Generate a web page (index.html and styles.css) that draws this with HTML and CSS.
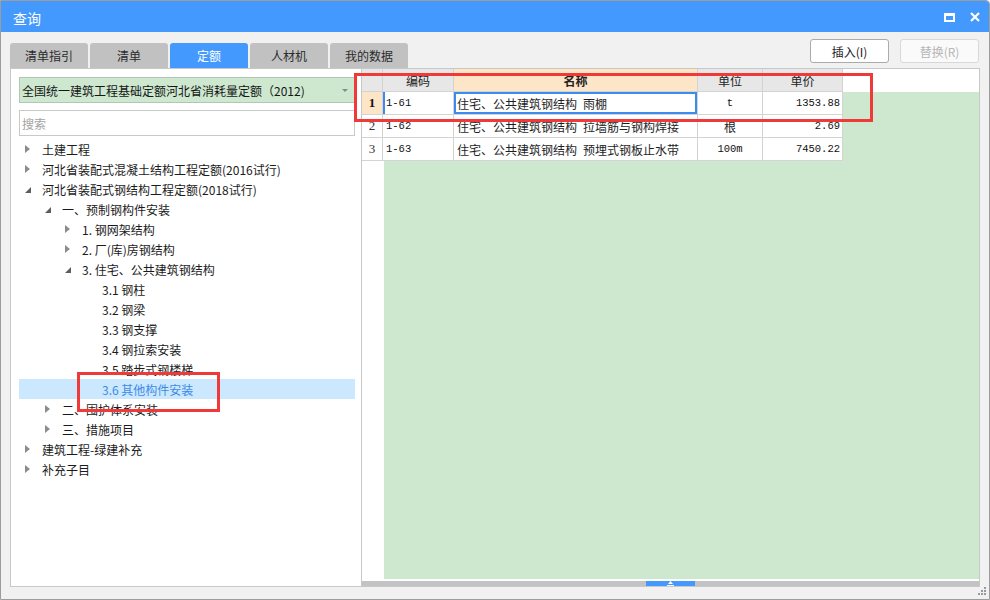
FILE: index.html
```html
<!DOCTYPE html>
<html lang="zh">
<head>
<meta charset="utf-8">
<title>查询</title>
<link rel="stylesheet" href="styles.css">
</head>
<body>
<div class="win">
  <div class="titlebar">
    <span class="title">查询</span>
    <div class="tb-icons">
      <svg class="ic" width="11" height="9" viewBox="0 0 11 9"><path d="M0 0H11V9H0Z M2 3H9V7H2Z" fill="#fff" fill-rule="evenodd"/></svg>
      <svg class="ic" width="10" height="10" viewBox="0 0 10 10"><path d="M1 1L9 9M9 1L1 9" stroke="#fff" stroke-width="2.2" fill="none"/></svg>
    </div>
  </div>

  <div class="toolbar">
    <div class="tabs">
      <div class="tab">清单指引</div>
      <div class="tab">清单</div>
      <div class="tab on">定额</div>
      <div class="tab">人材机</div>
      <div class="tab">我的数据</div>
    </div>
    <div class="btns">
      <button class="btn">插入(I)</button>
      <button class="btn dis">替换(R)</button>
    </div>
  </div>

  <div class="main">
    <div class="left">
      <div class="sel"><span>全国统一建筑工程基础定额河北省消耗量定额（2012)</span><i class="arr"></i></div>
      <div class="search">搜索</div>
      <div class="tree">
        <div class="node l0"><i class="tw shut"></i><span>土建工程</span></div>
        <div class="node l0"><i class="tw shut"></i><span>河北省装配式混凝土结构工程定额(2016试行)</span></div>
        <div class="node l0"><i class="tw open"></i><span>河北省装配式钢结构工程定额(2018试行)</span></div>
        <div class="node l1"><i class="tw open"></i><span>一、预制钢构件安装</span></div>
        <div class="node l2"><i class="tw shut"></i><span>1. 钢网架结构</span></div>
        <div class="node l2"><i class="tw shut"></i><span>2. 厂(库)房钢结构</span></div>
        <div class="node l2"><i class="tw open"></i><span>3. 住宅、公共建筑钢结构</span></div>
        <div class="node l3"><i class="tw"></i><span>3.1 钢柱</span></div>
        <div class="node l3"><i class="tw"></i><span>3.2 钢梁</span></div>
        <div class="node l3"><i class="tw"></i><span>3.3 钢支撑</span></div>
        <div class="node l3"><i class="tw"></i><span>3.4 钢拉索安装</span></div>
        <div class="node l3"><i class="tw"></i><span>3.5 踏步式钢楼梯</span></div>
        <div class="node l3 sel-row"><i class="tw"></i><span>3.6 其他构件安装</span></div>
        <div class="node l1"><i class="tw shut"></i><span>二、围护体系安装</span></div>
        <div class="node l1"><i class="tw shut"></i><span>三、措施项目</span></div>
        <div class="node l0"><i class="tw shut"></i><span>建筑工程-绿建补充</span></div>
        <div class="node l0"><i class="tw shut"></i><span>补充子目</span></div>
      </div>
    </div>

    <div class="right">
      <div class="grid">
        <div class="gh">
          <div class="c rn hd"></div>
          <div class="c code hd">编码</div>
          <div class="c name hd hn">名称</div>
          <div class="c unit hd">单位</div>
          <div class="c price hd">单价</div>
          <div class="gfill"></div>
        </div>
        <div class="gb">
          <div class="rncol">
            <div class="c rn num cur">1</div>
            <div class="c rn num">2</div>
            <div class="c rn num">3</div>
          </div>
          <div class="dcol">
            <div class="grow">
              <div class="c code mono curbar">1-61</div>
              <div class="c name focus">住宅、公共建筑钢结构&ensp;雨棚</div>
              <div class="c unit mono">t</div>
              <div class="c price mono">1353.88</div>
            </div>
            <div class="grow">
              <div class="c code mono">1-62</div>
              <div class="c name">住宅、公共建筑钢结构&ensp;拉墙筋与钢构焊接</div>
              <div class="c unit">根</div>
              <div class="c price mono">2.69</div>
            </div>
            <div class="grow">
              <div class="c code mono">1-63</div>
              <div class="c name">住宅、公共建筑钢结构&ensp;预埋式钢板止水带</div>
              <div class="c unit mono">100m</div>
              <div class="c price mono">7450.22</div>
            </div>
          </div>
        </div>
      </div>
      <div class="hs">
        <div class="thumb"><svg width="7" height="5" viewBox="0 0 7 5"><path d="M3.5 0L6 3H1Z M0 4H7V5H0Z" fill="#fff"/></svg></div>
      </div>
    </div>
  </div>

  <div class="foot">
    <svg width="9" height="9" viewBox="0 0 9 9" fill="#9a9a9a"><rect x="6" y="0" width="2" height="2"/><rect x="3" y="3" width="2" height="2"/><rect x="6" y="3" width="2" height="2"/><rect x="0" y="6" width="2" height="2"/><rect x="3" y="6" width="2" height="2"/><rect x="6" y="6" width="2" height="2"/></svg>
  </div>

  <div class="mark mark1"></div>
  <div class="mark mark2"></div>
</div>
</body>
</html>
```

FILE: styles.css
```css
* { box-sizing: border-box; margin: 0; padding: 0; }

body {
  margin: 0;
  font-family: "Noto Sans CJK SC", "Microsoft YaHei", sans-serif;
  font-size: 12px;
  color: #1e1e1e;
  background: #fff;
}

.win {
  position: relative;
  width: 990px;
  height: 600px;
  border: 1px solid #9c9c9c;
  border-radius: 0 4px 0 0;
  background: #f1f1f1;
  display: flex;
  flex-direction: column;
  overflow: hidden;
}

/* title bar */
.titlebar {
  height: 31px;
  flex: none;
  background: #4499ff;
  color: #fff;
  display: flex;
  align-items: center;
  padding: 0 9px 0 12px;
}
.title { flex: 1; font-size: 14px; line-height: 1; margin-top: 2px; }
.tb-icons { display: flex; align-items: center; gap: 15px; margin-top: 1px; }
.ic { display: block; }

/* toolbar: tabs + buttons */
.toolbar {
  height: 36px;
  flex: none;
  display: flex;
  justify-content: space-between;
  padding: 0 10px 0 9px;
}
.tabs { display: flex; gap: 2px; align-self: flex-end; }
.tab {
  width: 78px;
  height: 25px;
  background: #c1c1c1;
  border-radius: 3px 3px 0 0;
  display: flex;
  align-items: center;
  justify-content: center;
  color: #2b2b2b;
}
.tab.on { background: #4499ff; color: #fff; }

.btns { display: flex; gap: 11px; padding-top: 7px; }
.btn {
  width: 79px;
  height: 24px;
  border: 1px solid #ababab;
  border-radius: 3px;
  background: #fff;
  font: 12px "Noto Sans CJK SC", sans-serif;
  color: #222;
  display: flex;
  align-items: center;
  justify-content: center;
}
.btn.dis { border-color: #d8d8d8; color: #b6b6b6; background: #fafafa; }

/* main area */
.main {
  height: 519px;
  flex: none;
  display: flex;
  margin: 0 9px;
}

.left {
  width: 352px;
  flex: none;
  border: 1px solid #c8c8c8;
  background: #fff;
  padding: 8px 6px 0 8px;
}
.sel {
  height: 26px;
  background: #cde8cf;
  border: 1px solid #b3c6b5;
  display: flex;
  align-items: center;
  justify-content: space-between;
  padding: 0 6px 0 2px;
  color: #151515;
}
.arr {
  width: 0;
  height: 0;
  border-top: 3px solid #8a8a8a;
  border-left: 3px solid transparent;
  border-right: 3px solid transparent;
}
.search {
  height: 26px;
  margin-top: 7px;
  border: 1px solid #c9c9c9;
  padding-left: 2px;
  color: #a3a3a3;
  display: flex;
  align-items: center;
}

.tree { margin-top: 3px; }
.node {
  height: 20px;
  display: flex;
  align-items: center;
  white-space: nowrap;
  color: #1b1b1b;
}
.l0 { padding-left: 6px; }
.l1 { padding-left: 26px; }
.l2 { padding-left: 46px; }
.l3 { padding-left: 66px; }
.tw { width: 17px; flex: none; display: flex; align-items: center; height: 20px; }
.tw.shut::before {
  content: "";
  width: 0; height: 0;
  border-left: 5px solid #8c8c8c;
  border-top: 4px solid transparent;
  border-bottom: 4px solid transparent;
}
.tw.open::before {
  content: "";
  width: 0; height: 0;
  margin-top: 2px;
  border-bottom: 6px solid #5e5e5e;
  border-left: 6px solid transparent;
}
.node.sel-row { background: #cce8ff; color: #3b8be6; }

/* right grid */
.right {
  flex: 1;
  border: 1px solid #c8c8c8;
  border-left: none;
  background: #fff;
  display: flex;
  flex-direction: column;
}
.grid { flex: 1; display: flex; flex-direction: column; }
.gh { height: 23px; flex: none; display: flex; }
.gfill { flex: 1; }
.gb { flex: 1; display: flex; }
.rncol { width: 21px; flex: none; }
.dcol {
  flex: 1;
  margin-bottom: 2px;
  background: linear-gradient(90deg, #fff 0 1px, #cde8cf 1px);
}
.grow { display: flex; }

.c {
  height: 23px;
  flex: none;
  border-right: 1px solid #d3d3d3;
  border-bottom: 1px solid #d3d3d3;
  background: #fff;
  display: flex;
  align-items: center;
  white-space: nowrap;
  overflow: hidden;
}
.rn { width: 21px; justify-content: center; }
.code { width: 71px; padding-left: 3px; }
.name { width: 244px; padding-left: 3px; }
.unit { width: 65px; justify-content: center; }
.price { width: 80px; justify-content: flex-end; padding-right: 2px; }

.hd { background: #e7e7e7; justify-content: center; padding: 0; color: #222; }
.hn { background: #fde5c8; font-weight: 700; }

.num { font-family: "Liberation Serif", serif; font-size: 13px; color: #333; }
.num.cur { background: #fde5c8; font-weight: 700; color: #111; }
.mono { font-family: "Liberation Mono", monospace; font-size: 10.5px; color: #111; }
.curbar { box-shadow: inset 2px 0 0 #3c8cf0; }
.focus { box-shadow: inset 0 0 0 2px #3c8cf0; }

.hs {
  height: 5px;
  flex: none;
  background: #c3c3c3;
  display: flex;
  justify-content: center;
}
.thumb {
  width: 49px;
  background: #4499ff;
  display: flex;
  align-items: center;
  justify-content: center;
}
.thumb svg { display: block; }

.foot {
  flex: 1;
  display: flex;
  justify-content: flex-end;
  align-items: flex-start;
  padding-right: 2px;
}
.foot svg { display: block; }

/* red annotation boxes (overlays) */
.mark { position: absolute; border: 3px solid #f03a3a; }
.mark1 { left: 76px; top: 371px; width: 143px; height: 40px; }
.mark2 { left: 353px; top: 72px; width: 519px; height: 49px; }
```
